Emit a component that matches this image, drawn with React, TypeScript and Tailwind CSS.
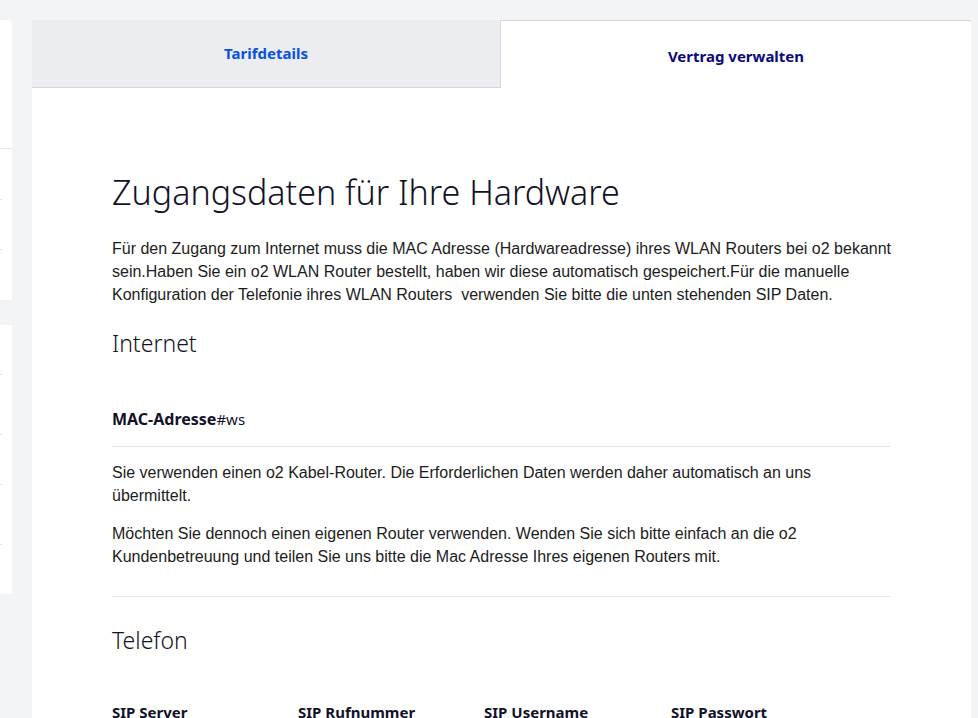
import React from "react";

const sans = { fontFamily: '"Noto Sans", "Open Sans", sans-serif' };
const arial = { fontFamily: '"Liberation Sans", Arial, sans-serif' };

export default function App() {
  return (
    <div className="min-h-screen w-full bg-[#f3f4f6] flex pt-[20px] overflow-hidden">
      {/* left sidebar (clipped) */}
      <div className="w-[12px] shrink-0 flex flex-col gap-[25px]">
        <div className="h-[280px] bg-white rounded-tr-[4px] flex flex-col overflow-hidden">
          <div className="h-[129px] border-b border-[#e2e4e7] shrink-0" />
          <div className="h-[51px] border-b border-[#e2e4e7] mr-[10px] shrink-0" />
          <div className="h-[50px] border-b border-[#e2e4e7] mr-[10px] shrink-0" />
        </div>
        <div className="h-[269px] bg-white flex flex-col overflow-hidden">
          <div className="h-[50px] border-b border-[#e2e4e7] mr-[10px] shrink-0" />
          <div className="h-[60px] border-b border-[#e2e4e7] mr-[10px] shrink-0" />
          <div className="h-[50px] border-b border-[#e2e4e7] mr-[10px] shrink-0" />
          <div className="h-[60px] border-b border-[#e2e4e7] mr-[10px] shrink-0" />
        </div>
      </div>

      {/* main panel */}
      <div className="ml-[20px] w-[939px] shrink-0 bg-white min-h-[700px]" style={sans}>
        <div className="flex h-[68px]">
          <div className="w-[469px] h-[68px] bg-[#ebedf0] border-b border-r border-[#d4d6d9] flex items-center justify-center pb-[1px]">
            <span className="text-[15px] font-bold text-[#0a50e2]">Tarifdetails</span>
          </div>
          <div className="flex-1 h-[68px] bg-white border-t border-[#d4d6d9] flex items-center justify-center pt-[3px]">
            <span className="text-[15px] font-bold text-[#0a0a78]">Vertrag verwalten</span>
          </div>
        </div>

        <div className="pl-[80px] pr-[81px] pt-[82px]">
          <h1 className="text-[34px] leading-[44px] font-light text-[#121228]">
            Zugangsdaten für Ihre Hardware
          </h1>
          <p
            className="mt-[23px] mr-[-12px] text-[16px] leading-[23px] text-[#1c1c1c]"
            style={arial}
          >
            Für den Zugang zum Internet muss die MAC Adresse (Hardwareadresse) ihres WLAN Routers bei o2 bekannt
            sein.Haben Sie ein o2 WLAN Router bestellt, haben wir diese automatisch gespeichert.Für die manuelle
            Konfiguration der Telefonie ihres WLAN Routers&nbsp; verwenden Sie bitte die unten stehenden SIP Daten.
          </p>

          <h2 className="mt-[21px] text-[23px] leading-[32px] font-light text-[#121228]">Internet</h2>

          <div className="mt-[48px] pb-[15px] border-b border-[#e3e4e6] flex items-baseline">
            <span className="text-[16px] font-bold text-[#121228]">MAC-Adresse</span>
            <span className="text-[15px] text-[#121228]">#ws</span>
          </div>

          <div
            className="pt-[14px] pb-[28px] border-b border-[#e3e4e6] text-[16px] leading-[23px] text-[#1c1c1c]"
            style={arial}
          >
            <p>
              Sie verwenden einen o2 Kabel-Router. Die Erforderlichen Daten werden daher automatisch an uns
              übermittelt.
            </p>
            <p className="mt-[15px]">
              Möchten Sie dennoch einen eigenen Router verwenden. Wenden Sie sich bitte einfach an die o2
              Kundenbetreuung und teilen Sie uns bitte die Mac Adresse Ihres eigenen Routers mit.
            </p>
          </div>

          <h2 className="mt-[27px] text-[23px] leading-[32px] font-light text-[#121228]">Telefon</h2>

          <div className="mt-[46px] grid grid-cols-[186px_186px_187px_1fr]">
            <span className="text-[15px] leading-[20px] font-bold text-[#121228]">SIP Server</span>
            <span className="text-[15px] leading-[20px] font-bold text-[#121228]">SIP Rufnummer</span>
            <span className="text-[15px] leading-[20px] font-bold text-[#121228]">SIP Username</span>
            <span className="text-[15px] leading-[20px] font-bold text-[#121228]">SIP Passwort</span>
          </div>
        </div>
      </div>
    </div>
  );
}
